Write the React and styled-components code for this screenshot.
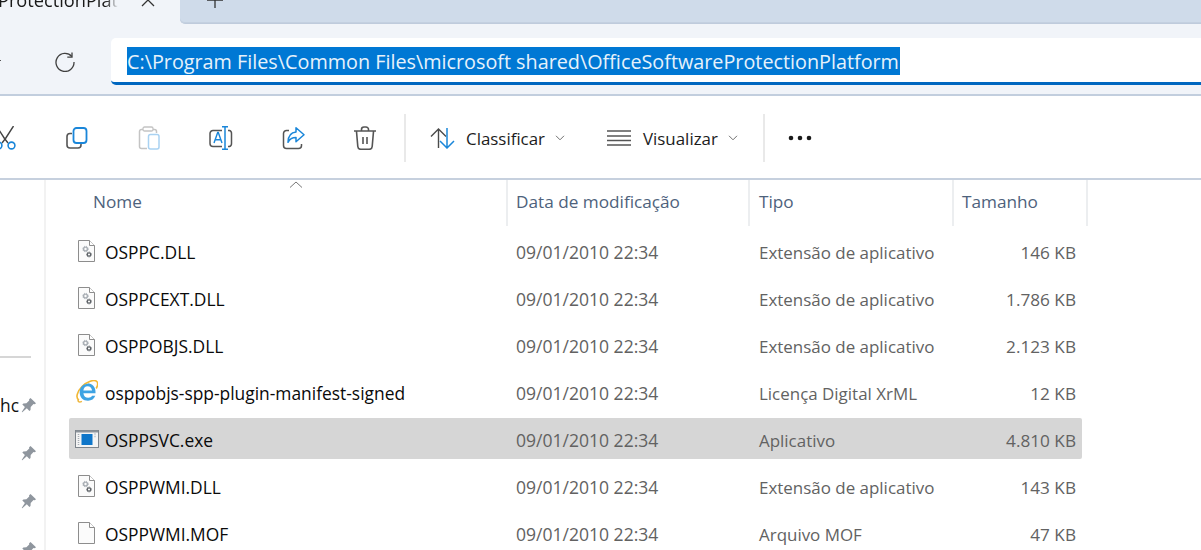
import React from "react";
import styled, { createGlobalStyle } from "styled-components";

const Global = createGlobalStyle`
  html, body { margin: 0; padding: 0; background: #fff; overflow: hidden; }
  * { box-sizing: border-box; }
  body { font-family: "Open Sans", "Noto Sans", sans-serif; }
`;

const Page = styled.div`
  width: 1201px; height: 550px; overflow: hidden; display: flex; flex-direction: column; background: #fff;
`;
const TabStrip = styled.div`
  height: 24px; flex: none; display: flex; background: #f1f4f9; overflow: hidden;
`;
const ActiveTab = styled.div`
  width: 180px; flex: none; display: flex; align-items: flex-start; color: #1a1a1a;
`;
const TabTitle = styled.div`
  width: 118px; height: 33px; overflow: hidden; white-space: nowrap; font-size: 18.2px; line-height: 26px;
  margin-top: -13px; text-indent: -2px;
  -webkit-mask-image: linear-gradient(to right, #000 106px, transparent 118px);
  mask-image: linear-gradient(to right, #000 106px, transparent 118px);
`;
const ClippedIcon = styled.svg`
  flex: none; margin-top: -8px; margin-left: ${p => p.$left}px; color: #333;
`;
const InactiveArea = styled.div`
  flex: 1; display: flex; align-items: flex-start; background: #cfdbea; border-bottom: 1px solid #bfcbdc; border-bottom-left-radius: 5px;
  box-shadow: inset 0 -1px 0 #c4d0e0;
`;
const AddressBar = styled.div`
  height: 72px; flex: none; background: #f1f4f9; border-bottom: 2px solid #c2cede; display: flex; align-items: flex-start; padding-top: 14px;
`;
const BackStub = styled.svg`
  flex: none; margin-top: 21px; color: #555;
`;
const RefreshSlot = styled.div`
  width: 110px; height: 48px; flex: none; display: flex; align-items: center; padding-left: 54px; color: #404040;
`;
const AddressInput = styled.div`
  flex: 1; height: 47px; background: #fff; border-bottom: 3px solid #0067c0; border-radius: 5px 0 0 5px; padding: 9px 0 0 16px; display: flex; align-items: flex-start;
`;
const SelectedPath = styled.span`
  background: #0078d4; color: #e6f2fb; height: 28px; line-height: 29px; font-size: 19.8px; white-space: nowrap;
  display: block; padding-right: 1px;
`;
const Toolbar = styled.div`
  height: 84px; flex: none; border-bottom: 2px solid #c6d0de; display: flex; align-items: center; padding-top: 2px; background: #fff;
`;
const IconButton = styled.div`
  width: 72px; height: 48px; flex: none; display: flex; align-items: center; justify-content: center;
  &:first-child { margin-left: -31px; }
`;
const Divider = styled.div`
  width: 2px; height: 48px; background: #e9e9e9; flex: none; margin-left: ${p => p.$left}px;
`;
const MenuButton = styled.div`
  display: flex; align-items: center; flex: none; margin-left: ${p => p.$left}px; color: #1c1c1c; font-size: 16.9px;
`;
const MenuLabel = styled.span`
  margin-left: 11px; margin-right: 10px; white-space: nowrap; padding-top: 1px;
`;
const Main = styled.div`
  flex: 1; display: flex; min-height: 0;
`;
const NavPane = styled.div`
  width: 46px; flex: none; border-right: 2px solid #f2f2f2; display: flex; flex-direction: column; overflow: hidden;
`;
const NavRule = styled.div`
  width: 31px; height: 2px; background: #d6d6d6; margin-top: 176px; margin-bottom: 23px; flex: none;
`;
const PinRow = styled.div`
  height: 48px; flex: none; display: flex; align-items: center; justify-content: flex-end; padding-right: 7px; font-size: 17.4px; color: #111;
`;
const PinLabel = styled.span`
  flex: 1;
`;
const ListPane = styled.div`
  flex: 1; position: relative; padding-left: 23px; min-width: 0;
`;
const SortCaret = styled.svg`
  position: absolute; left: 243px; top: 1px; color: #777;
`;
const cols = "439px 242px 204px 134px";
const HeaderRow = styled.div`
  display: grid; grid-template-columns: ${cols}; height: 46px; margin-bottom: 4px;
`;
const HeaderCell = styled.div`
  font-size: 17.2px; color: #4e627c; display: flex; align-items: center; padding-left: ${p => p.$pad}px; border-right: 2px solid #eceef0; padding-bottom: 4px;
  white-space: nowrap;
`;
const FileRow = styled.div`
  display: grid; grid-template-columns: ${cols}; width: 1013px; height: 41px; margin-bottom: 6px; align-items: center; border-radius: 2px; padding-top: 3px;
  background: ${p => (p.$selected ? "#d6d6d6" : "transparent")};
`;
const NameCell = styled.div`
  display: flex; align-items: center; color: #0a0a0a; font-size: 17.4px; white-space: nowrap; padding-left: 6px;
`;
const IconSlot = styled.div`
  width: 30px; height: 26px; flex: none; display: flex; align-items: center; padding-left: 3px; margin-top: -3px;
`;
const DateCell = styled.div`
  color: #626262; font-size: 17.55px; white-space: nowrap; padding-left: 8px;
`;
const TypeCell = styled.div`
  color: #626262; font-size: 16.95px; white-space: nowrap; padding-left: 9px;
`;
const SizeCell = styled.div`
  color: #626262; font-size: 17.2px; white-space: nowrap; text-align: right; width: 116px; margin-left: 6px;
`;

const Svg = ({ w = 24, h = 24, children, ...r }) => (
  <svg width={w} height={h} viewBox={`0 0 ${w} ${h}`} fill="none" {...r}>{children}</svg>
);

const CutIcon = () => (
  <Svg>
    <path d="M3.500 0l8 12.500M20.500 0l-8 12.500" stroke="#444" strokeWidth="1.400" />
    <path d="M11.500 12.500l3.500 4.500M12.500 12.500L9 17" stroke="#444" strokeWidth="1.400" />
    <circle cx="5.500" cy="19.500" r="3.400" stroke="#1a86d9" strokeWidth="1.600" />
    <circle cx="18.500" cy="19.500" r="3.400" stroke="#1a86d9" strokeWidth="1.600" />
  </Svg>
);
const CopyIcon = () => (
  <Svg>
    <path d="M7 7.500H5A3 3 0 0 0 2 10.500v8.500a3 3 0 0 0 3 3h8a3 3 0 0 0 3-3v-1" stroke="#555" strokeWidth="1.600" />
    <rect x="8.500" y="2" width="13" height="15" rx="3" stroke="#1a86d9" strokeWidth="1.800" />
  </Svg>
);
const PasteIcon = () => (
  <Svg>
    <path d="M6 3.500H4.500a2 2 0 0 0-2 2v15a2 2 0 0 0 2 2h5.500M16 3.500h1.500a2 2 0 0 1 2 2v1.500" stroke="#c4c4c4" strokeWidth="1.500" />
    <rect x="6" y="1" width="10" height="4" rx="1.500" stroke="#c4c4c4" strokeWidth="1.300" />
    <rect x="11.500" y="8.500" width="10.500" height="14.500" rx="2" stroke="#a9d2f2" strokeWidth="1.500" />
  </Svg>
);
const RenameIcon = () => (
  <Svg>
    <path d="M13 4.500H4a3 3 0 0 0-3 3v10a3 3 0 0 0 3 3h9M19 4.500h1.500a3 3 0 0 1 2 3v10a3 3 0 0 1-2 3H19" stroke="#555" strokeWidth="1.500" />
    <path d="M16 .8v22.400M13 .8h6M13 23.200h6" stroke="#1a86d9" strokeWidth="1.500" />
    <path d="M5 17l3.700-10.500h.6L13 17M6.300 13.800h5.400" stroke="#1a86d9" strokeWidth="1.400" />
  </Svg>
);
const ShareIcon = () => (
  <Svg>
    <path d="M8 4.500H5.500a3 3 0 0 0-3 3v12a3 3 0 0 0 3 3h12a3 3 0 0 0 3-3v-1.500" stroke="#555" strokeWidth="1.500" />
    <path d="M15 1.800L23 8.800l-8 7v-4.300c-3.700 0-6.200 1.200-8 4.800.2-6 3.200-9.800 8-10.200z" stroke="#1a86d9" strokeWidth="1.500" strokeLinejoin="round" />
  </Svg>
);
const TrashIcon = () => (
  <Svg>
    <path d="M1 5h22M8.500 5V3.500a2.500 2.500 0 0 1 2.500-2.500h2a2.500 2.500 0 0 1 2.500 2.500V5M3.500 5.500l1.300 15a3 3 0 0 0 3 2.800h8.400a3 3 0 0 0 3-2.800l1.300-15M10 11v7M14 11v7" stroke="#555" strokeWidth="1.600" />
  </Svg>
);
const SortIcon = () => (
  <Svg w={25} h={22}>
    <path d="M8.500 21V2M1 9.500L8.500 2 16 9.500" stroke="#4a4a4a" strokeWidth="1.400" />
    <path d="M17 1v19.500M10 14l7 7 7-7" stroke="#1a86d9" strokeWidth="1.500" />
  </Svg>
);
const ViewIcon = () => (
  <Svg w={25} h={18}>
    <path d="M0 2h24M0 7h24M0 11.500h24M0 16h24" stroke="#555" strokeWidth="1.500" />
  </Svg>
);
const Chevron = () => (
  <Svg w={10} h={6}><path d="M1 .8l4 4 4-4" stroke="#707070" strokeWidth="1" /></Svg>
);
const Dots = () => (
  <Svg w={24} h={6}>
    <circle cx="3" cy="3" r="2.300" fill="#1a1a1a" /><circle cx="12" cy="3" r="2.300" fill="#1a1a1a" /><circle cx="21" cy="3" r="2.300" fill="#1a1a1a" />
  </Svg>
);
const PinIcon = () => (
  <Svg w={16} h={16}>
    <path d="M9.500 1l5.500 5.300-1.200 1-1.300-.2-2.800 2.800-.2 3-1.100 1-2.600-2.700L1.300 15.300l-.6-.4 3.200-4.800L1.300 7.400l1.100-1 3-.2 2.800-2.800-.1-1.200z" fill="#8f969e" />
  </Svg>
);
const Gear = ({ cx, cy, r, c }) => (
  <g>
    <circle cx={cx} cy={cy} r={r} stroke={c} strokeWidth={r * 0.75} />
    <circle cx={cx} cy={cy} r={r * 1.45} stroke={c} strokeWidth={r * 0.5} strokeDasharray="1.100 1.100" />
  </g>
);
const PageShape = () => (
  <>
    <path d="M.5.500h11l5 5v16H.5z" fill="#fbfbfb" stroke="#8d8d8d" />
    <path d="M11.500.500v5h5" fill="#fff" stroke="#8d8d8d" />
  </>
);
const DllIcon = () => (
  <Svg w={17} h={22}>
    <PageShape />
    <Gear cx={7.500} cy={9} r={1.900} c="#a8aeb4" />
    <Gear cx={11} cy={14.500} r={1.700} c="#5e6368" />
  </Svg>
);
const PlainFileIcon = () => (
  <Svg w={17} h={22}><PageShape /></Svg>
);
const IeIcon = () => (
  <Svg w={22} h={23} style={{ marginLeft: -2 }}>
    <path d="M3 20c-4-2-1.500-9 3-13.500C11 1.500 18 -.8 20.800 1.500c1.600 1.700.8 4.500-.6 7" stroke="#f2b733" strokeWidth="1.600" />
    <path d="M11.500 3.200c4.800 0 8 3.800 8 8.500v1.500H7.400c.3 3 2.300 4.500 4.800 4.500 1.900 0 3.200-.7 4-1.900h3.100c-1.100 3.200-3.800 4.900-7.300 4.900-5 0-8.300-3.400-8.300-8.500 0-5 3.400-8.500 8.300-8.500zm4.600 7.400c-.2-2.500-2-4.400-4.500-4.400-2.500 0-4.200 1.900-4.200 4.400z" fill="#3ea3e3" />
    <path d="M2.500 19.500c-1.400 1.800.4 3.400 3.400 1.800" stroke="#eeb53a" strokeWidth="1.400" />
  </Svg>
);
const ExeIcon = () => (
  <Svg w={24} h={18} style={{ marginLeft: -3 }}>
    <rect x=".5" y=".5" width="23" height="17" fill="#f4f4f4" stroke="#7e858c" />
    <path d="M1 1.500h22" stroke="#8c939a" strokeWidth="2" />
    <path d="M3.500 4v11M19.500 4h2M19.500 6.500h2" stroke="#a6adb4" strokeWidth="1.500" strokeDasharray="1 1" />
    <rect x="6.500" y="4" width="11" height="11" fill="#0f76c9" />
  </Svg>
);

const icons = { dll: DllIcon, ie: IeIcon, exe: ExeIcon, file: PlainFileIcon };
const files = [
  ["OSPPC.DLL", "Extensão de aplicativo", "146 KB", "dll"],
  ["OSPPCEXT.DLL", "Extensão de aplicativo", "1.786 KB", "dll"],
  ["OSPPOBJS.DLL", "Extensão de aplicativo", "2.123 KB", "dll"],
  ["osppobjs-spp-plugin-manifest-signed", "Licença Digital XrML", "12 KB", "ie"],
  ["OSPPSVC.exe", "Aplicativo", "4.810 KB", "exe", true],
  ["OSPPWMI.DLL", "Extensão de aplicativo", "143 KB", "dll"],
  ["OSPPWMI.MOF", "Arquivo MOF", "47 KB", "file"],
];

export default function App() {
  return (
    <Page>
      <Global />
      <TabStrip>
        <ActiveTab>
          <TabTitle>ProtectionPlatform</TabTitle>
          <ClippedIcon $left={22} width="16" height="16" viewBox="0 0 16 16" fill="none">
            <path d="M2 2l12 12M14 2L2 14" stroke="currentColor" strokeWidth="1.300" />
          </ClippedIcon>
        </ActiveTab>
        <InactiveArea>
          <ClippedIcon $left={27} width="16" height="16" viewBox="0 0 16 16" fill="none">
            <path d="M8 0v16M0 8h16" stroke="currentColor" strokeWidth="1.300" />
          </ClippedIcon>
        </InactiveArea>
      </TabStrip>
      <AddressBar>
        <BackStub width="1" height="3" viewBox="0 0 1 3"><path d="M0 1.500h1" stroke="currentColor" strokeWidth="1.200" /></BackStub>
        <RefreshSlot>
          <svg width="20" height="20" viewBox="0 0 20 20" fill="none">
            <path d="M16.800 4.500A9 9 0 1 0 19 10" stroke="currentColor" strokeWidth="1.300" />
            <path d="M17 .5v4.700h-4.700" stroke="currentColor" strokeWidth="1.300" />
          </svg>
        </RefreshSlot>
        <AddressInput>
          <SelectedPath>C:\Program Files\Common Files\microsoft shared\OfficeSoftwareProtectionPlatform</SelectedPath>
        </AddressInput>
      </AddressBar>
      <Toolbar>
        <IconButton><CutIcon /></IconButton>
        <IconButton><CopyIcon /></IconButton>
        <IconButton><PasteIcon /></IconButton>
        <IconButton><RenameIcon /></IconButton>
        <IconButton><ShareIcon /></IconButton>
        <IconButton><TrashIcon /></IconButton>
        <Divider $left={3} />
        <MenuButton $left={24}><SortIcon /><MenuLabel>Classificar</MenuLabel><Chevron /></MenuButton>
        <MenuButton $left={42}><ViewIcon /><MenuLabel>Visualizar</MenuLabel><Chevron /></MenuButton>
        <Divider $left={25} />
        <MenuButton $left={23}><Dots /></MenuButton>
      </Toolbar>
      <Main>
        <NavPane>
          <NavRule />
          <PinRow><PinLabel>hc</PinLabel><PinIcon /></PinRow>
          <PinRow><PinIcon /></PinRow>
          <PinRow><PinIcon /></PinRow>
          <PinRow><PinIcon /></PinRow>
        </NavPane>
        <ListPane>
          <SortCaret width="14" height="7" viewBox="0 0 14 7" fill="none"><path d="M1 6.500L7 1l6 5.500" stroke="currentColor" strokeWidth="1" /></SortCaret>
          <HeaderRow>
            <HeaderCell $pad={24}>Nome</HeaderCell>
            <HeaderCell $pad={8}>Data de modificação</HeaderCell>
            <HeaderCell $pad={9}>Tipo</HeaderCell>
            <HeaderCell $pad={8}>Tamanho</HeaderCell>
          </HeaderRow>
          {files.map(([name, type, size, icon, selected]) => {
            const Icon = icons[icon];
            return (
              <FileRow key={name} $selected={selected}>
                <NameCell><IconSlot><Icon /></IconSlot>{name}</NameCell>
                <DateCell>09/01/2010 22:34</DateCell>
                <TypeCell>{type}</TypeCell>
                <SizeCell>{size}</SizeCell>
              </FileRow>
            );
          })}
        </ListPane>
      </Main>
    </Page>
  );
}
